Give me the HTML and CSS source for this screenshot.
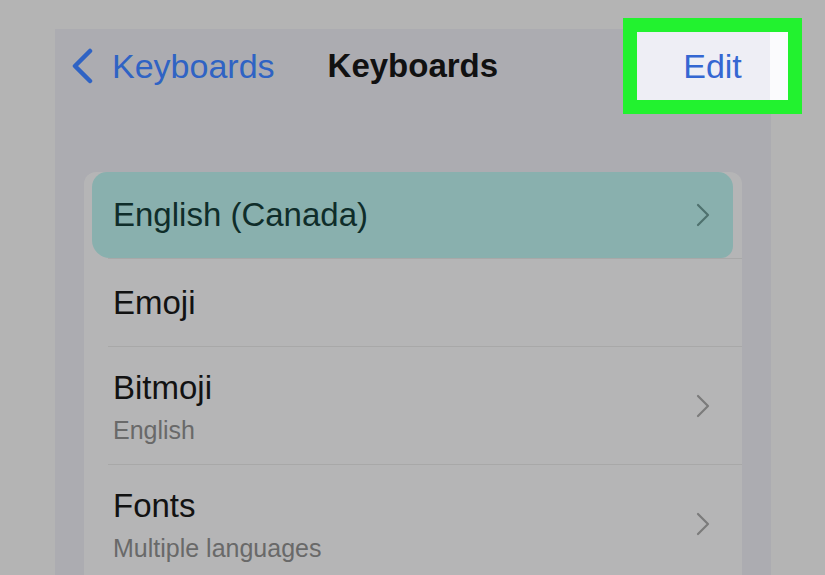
FILE: index.html
```html
<!DOCTYPE html>
<html lang="en">
<head>
<meta charset="utf-8">
<title>Keyboards</title>
<link rel="stylesheet" href="styles.css">
</head>
<body>
<div class="phone">
  <div class="nav">
    <svg class="back-chev" width="22" height="36" viewBox="0 0 22 36"><path d="M19 3 L4 18 L19 33" fill="none" stroke="#2f63c4" stroke-width="4.5" stroke-linecap="round" stroke-linejoin="round"/></svg>
    <span class="back-label">Keyboards</span>
    <span class="title">Keyboards</span>
    <span class="edit">Edit</span>
  </div>
  <div class="card">
    <div class="row-hi">
      <span class="label label-hi">English (Canada)</span>
      <svg class="chev" width="14" height="24" viewBox="0 0 14 24"><path d="M2 2 L12 12 L2 22" fill="none" stroke="#4f716e" stroke-width="2.2" stroke-linecap="round" stroke-linejoin="round"/></svg>
    </div>
    <div class="row row-single">
      <span class="label">Emoji</span>
    </div>
    <div class="row row-double">
      <div class="texts">
        <span class="label">Bitmoji</span>
        <span class="sub">English</span>
      </div>
      <svg class="chev" width="14" height="24" viewBox="0 0 14 24"><path d="M2 2 L12 12 L2 22" fill="none" stroke="#7b7b7b" stroke-width="2.2" stroke-linecap="round" stroke-linejoin="round"/></svg>
    </div>
    <div class="row row-double">
      <div class="texts">
        <span class="label">Fonts</span>
        <span class="sub">Multiple languages</span>
      </div>
      <svg class="chev" width="14" height="24" viewBox="0 0 14 24"><path d="M2 2 L12 12 L2 22" fill="none" stroke="#7b7b7b" stroke-width="2.2" stroke-linecap="round" stroke-linejoin="round"/></svg>
    </div>
  </div>
</div>
</body>
</html>
```
FILE: styles.css
```css
html, body {
  margin: 0;
  padding: 0;
}
body {
  width: 825px;
  height: 575px;
  overflow: hidden;
  background: #b4b4b4;
  font-family: "Liberation Sans", Arial, sans-serif;
}
.phone {
  margin: 29px 0 0 55px;
  width: 716px;
  height: 546px;
  background: #acacb1;
  box-sizing: border-box;
  padding-top: 3px;
}
.nav {
  display: flex;
  align-items: center;
  height: 68px;
  padding-left: 16px;
}
.back-chev {
  display: block;
  flex: none;
}
.back-label {
  margin-left: 19px;
  font-size: 34px;
  color: #2f63c4;
}
.title {
  margin-left: 53px;
  font-size: 33px;
  font-weight: bold;
  color: #111;
}
.edit {
  margin-left: auto;
  margin-right: -17px;
  width: 151px;
  height: 68px;
  display: flex;
  align-items: center;
  justify-content: center;
  font-size: 34px;
  color: #3567d2;
  background: linear-gradient(to right, #eeeef5 calc(100% - 18px), #fbfbfd 0);
  outline: 14px solid #22f22f;
}
.card {
  margin: 72px 29px 0 29px;
  background: #b5b5b6;
  border-radius: 12px 12px 0 0;
  height: 403px;
}
.row-hi {
  margin: 0 9px 0 8px;
  height: 86px;
  display: flex;
  align-items: center;
  justify-content: space-between;
  padding: 0 23px 0 21px;
  background: #89b0ae;
  border-radius: 15px 15px 12px 18px;
}
.label {
  font-size: 33px;
  line-height: 40px;
  color: #121212;
}
.label-hi {
  color: #0f2d2a;
}
.row {
  margin-left: 24px;
  border-top: 1px solid #a8a8a8;
  padding: 0 32px 0 5px;
  display: flex;
  align-items: center;
  justify-content: space-between;
}
.row-single {
  height: 87px;
}
.row-double {
  height: 117px;
}
.texts {
  display: flex;
  flex-direction: column;
  gap: 7px;
  padding-top: 1px;
}
.sub {
  font-size: 25px;
  line-height: 30px;
  color: #696969;
}
.chev {
  display: block;
  flex: none;
}
```
